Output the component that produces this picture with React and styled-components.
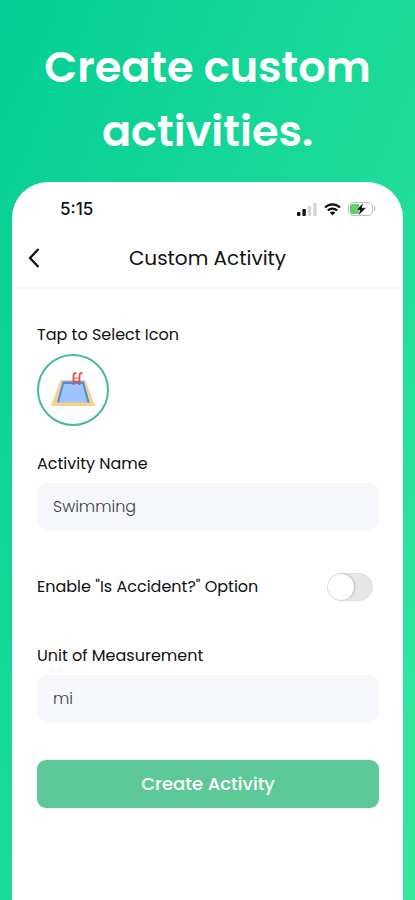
import React, { useState } from "react";
import styled, { createGlobalStyle } from "styled-components";

const GlobalStyle = createGlobalStyle`
  *, *::before, *::after { box-sizing: border-box; }
  body { margin: 0; font-family: Poppins, Inter, sans-serif; color: #111; }
  button, input { font: inherit; color: inherit; }
`;

const Page = styled.main`
  min-height: 100vh;
  display: flex;
  flex-direction: column;
  padding: 0 12px;
  background: linear-gradient(115deg, #05ce94 0%, #18d998 45%, #36e79d 100%);
`;

const Headline = styled.h1`
  margin: 0;
  padding: 35px 24px 19px;
  color: #fff;
  font-size: 43px;
  font-weight: 600;
  line-height: 64px;
  text-align: center;
`;

const Phone = styled.section`
  flex: 1;
  background: #fff;
  border-radius: 36px 36px 0 0;
`;

const StatusBar = styled.div`
  display: flex;
  align-items: center;
  justify-content: space-between;
  height: 48px;
  padding: 6px 27px 0 48px;
`;

const Time = styled.time`
  font-family: Inter, sans-serif;
  font-size: 17px;
  font-weight: 500;
  line-height: 24px;
`;

const StatusIcons = styled.div`
  display: flex;
  align-items: center;
  gap: 7px;
`;

const NavBar = styled.header`
  display: grid;
  grid-template-columns: 40px 1fr 40px;
  align-items: center;
  height: 60px;
  margin: 0 4px;
  border-bottom: 4px solid #f7f7f7;
`;

const BackButton = styled.button`
  display: flex;
  padding: 8px 12px;
  border: 0;
  background: none;
  cursor: pointer;
`;

const NavTitle = styled.h2`
  margin: 0;
  font-size: 20px;
  font-weight: 400;
  line-height: 28px;
  text-align: center;
`;

const Form = styled.form`
  display: flex;
  flex-direction: column;
  padding: 33px 24px 40px 25px;
`;

const Field = styled.div`
  display: flex;
  flex-direction: column;
  align-items: flex-start;
  gap: 7px;
  margin-bottom: ${({ $space }) => $space}px;
`;

const Label = styled.label`
  font-size: 16px;
  font-weight: 400;
  line-height: 24px;
`;

const IconPicker = styled.button`
  display: flex;
  align-items: center;
  justify-content: center;
  width: 72px;
  height: 72px;
  padding: 0;
  border: 2px solid #45be8b;
  border-radius: 50%;
  background: #fff;
  cursor: pointer;
`;

const TextInput = styled.input`
  width: 100%;
  height: 48px;
  padding: 0 16px 2px;
  border: 0;
  border-radius: 10px;
  background: #f5f7fb;
  color: #3c3c40;
  font-size: 16px;
  font-weight: 300;
`;

const ToggleRow = styled.div`
  display: flex;
  align-items: center;
  justify-content: space-between;
  margin-bottom: 43px;
  padding-right: 6px;
`;

const Switch = styled.input`
  appearance: none;
  display: flex;
  width: 46px;
  height: 28px;
  margin: 0;
  border: 1px solid #dedede;
  border-radius: 14px;
  background: #e6e6e6;
  cursor: pointer;

  &::before {
    content: "";
    width: 26px;
    height: 26px;
    border-radius: 50%;
    background: #fff;
    box-shadow: 1px 0 2px rgba(0, 0, 0, 0.2);
  }

  &:checked {
    justify-content: flex-end;
    background: #5dc998;
  }
`;

const SubmitButton = styled.button`
  height: 48px;
  padding: 0 16px 2px;
  border: 0;
  border-radius: 9px;
  background: #5dc998;
  color: #fff;
  font-size: 18px;
  font-weight: 500;
  cursor: pointer;
`;

const SignalIcon = () => (
  <svg width="20" height="13" viewBox="0 0 20 13" aria-hidden="true">
    <rect x="0" y="9" width="3.400" height="4" rx="1" fill="#111" />
    <rect x="5.400" y="6" width="3.400" height="7" rx="1" fill="#111" />
    <rect x="10.800" y="3" width="3.400" height="10" rx="1" fill="#d4d4d4" />
    <rect x="16.200" y="0" width="3.400" height="13" rx="1" fill="#d4d4d4" />
  </svg>
);

const WifiIcon = () => (
  <svg width="17" height="13" viewBox="0 0 17 13" aria-hidden="true">
    <g fill="none" stroke="#111" strokeWidth="2.200">
      <path d="M1 4.600C5.200.2 11.800.2 16 4.600" />
      <path d="M3.800 7.500C6.400 4.900 10.600 4.900 13.200 7.500" />
    </g>
    <path d="M5.800 9.500C7.300 8.200 9.700 8.200 11.200 9.500L8.500 12.500Z" fill="#111" />
  </svg>
);

const BatteryIcon = () => (
  <svg width="28" height="14" viewBox="0 0 28 14" aria-hidden="true">
    <rect x="0.500" y="0.500" width="24" height="13" rx="4.500" fill="#fff" stroke="#bdbdbd" />
    <path d="M26 4.500C28 5.500 28 8.500 26 9.500Z" fill="#bdbdbd" />
    <path d="M4.500 2H11V12H4.500Q2 12 2 9.500V4.500Q2 2 4.500 2Z" fill="#5fd068" />
    <path d="M15.500.4L8 8.200H11.800L10.200 13.700L18.400 5.700H14Z" fill="#111" stroke="#fff" strokeWidth="0.600" />
  </svg>
);

const BackIcon = () => (
  <svg width="12" height="20" viewBox="0 0 12 20" aria-hidden="true">
    <path d="M10.500 1L2 10L10.500 19" fill="none" stroke="#111" strokeWidth="2.300" />
  </svg>
);

const PoolIcon = () => (
  <svg width="44" height="36" viewBox="0 0 44 36" aria-hidden="true">
    <path d="M9.500 8H34.500L44 34H0Z" fill="#f7d08e" />
    <path d="M12 9.500H32.500L38 30.500H6.500Z" fill="#9dc5fb" />
    <path d="M11.500 9.500H33L38.500 30.500H36.500L31.500 12H13L8 30.500H6Z" fill="#4a8de0" />
    <g fill="none" stroke="#d9534a" strokeWidth="1.800">
      <path d="M22.500 13V3.500Q22.500.9 25.500.9" />
      <path d="M28.500 13V3.500Q28.500.9 31.500.9" />
      <path d="M22.500 6H28.500M22.500 9.500H28.500" strokeWidth="1" />
    </g>
  </svg>
);

export default function App() {
  const [name, setName] = useState("Swimming");
  const [unit, setUnit] = useState("mi");
  const [accident, setAccident] = useState(false);

  return (
    <>
      <GlobalStyle />
      <Page>
        <Headline>Create custom activities.</Headline>
        <Phone>
          <StatusBar>
            <Time>5:15</Time>
            <StatusIcons>
              <SignalIcon />
              <WifiIcon />
              <BatteryIcon />
            </StatusIcons>
          </StatusBar>
          <NavBar>
            <BackButton type="button" aria-label="Back">
              <BackIcon />
            </BackButton>
            <NavTitle>Custom Activity</NavTitle>
          </NavBar>
          <Form onSubmit={(event) => event.preventDefault()}>
            <Field $space={26}>
              <Label htmlFor="activity-icon">Tap to Select Icon</Label>
              <IconPicker id="activity-icon" type="button">
                <PoolIcon />
              </IconPicker>
            </Field>
            <Field $space={42}>
              <Label htmlFor="activity-name">Activity Name</Label>
              <TextInput
                id="activity-name"
                value={name}
                onChange={(event) => setName(event.target.value)}
              />
            </Field>
            <ToggleRow>
              <Label htmlFor="accident">Enable "Is Accident?" Option</Label>
              <Switch
                id="accident"
                type="checkbox"
                role="switch"
                checked={accident}
                onChange={(event) => setAccident(event.target.checked)}
              />
            </ToggleRow>
            <Field $space={37}>
              <Label htmlFor="unit">Unit of Measurement</Label>
              <TextInput
                id="unit"
                value={unit}
                onChange={(event) => setUnit(event.target.value)}
              />
            </Field>
            <SubmitButton type="submit">Create Activity</SubmitButton>
          </Form>
        </Phone>
      </Page>
    </>
  );
}
